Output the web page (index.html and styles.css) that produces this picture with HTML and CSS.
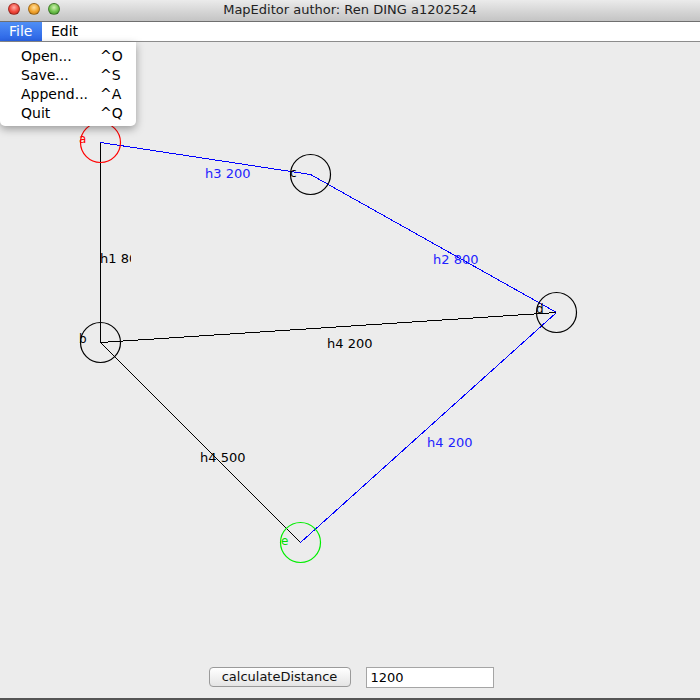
FILE: index.html
```html
<!DOCTYPE html>
<html>
<head>
<meta charset="utf-8">
<title>MapEditor</title>
<link rel="stylesheet" href="styles.css">
</head>
<body>
<div class="window">
  <div class="titlebar">
    <div class="lights">
      <span class="light red"></span>
      <span class="light yellow"></span>
      <span class="light green"></span>
    </div>
    <div class="title">MapEditor author: Ren DING a1202524</div>
  </div>
  <div class="menubar">
    <span class="menu active">File</span>
    <span class="menu">Edit</span>
  </div>
  <div class="canvas">
    <svg class="map" width="700" height="615" viewBox="0 42 700 615" xmlns="http://www.w3.org/2000/svg">
      <defs>
        <clipPath id="clipH1"><rect x="90" y="240" width="41" height="30"/></clipPath>
      </defs>
      <g shape-rendering="crispEdges" stroke-width="1" fill="none">
        <line x1="100.5" y1="142.5" x2="100.5" y2="342.5" stroke="#000"/>
        <line x1="100.5" y1="142.5" x2="310.5" y2="174.5" stroke="#0000ff"/>
        <line x1="310.5" y1="174.5" x2="556.5" y2="312.5" stroke="#0000ff"/>
        <line x1="100.5" y1="342.5" x2="556.5" y2="312.5" stroke="#000"/>
        <line x1="556.5" y1="312.5" x2="300.5" y2="542.5" stroke="#0000ff"/>
        <line x1="100.5" y1="342.5" x2="300.5" y2="542.5" stroke="#000"/>
      </g>
      <g fill="none" stroke-width="1.2">
        <circle cx="100.5" cy="142.5" r="20" stroke="#ff0000"/>
        <circle cx="310.5" cy="174.5" r="20" stroke="#000"/>
        <circle cx="100.5" cy="342.5" r="20" stroke="#000"/>
        <circle cx="556.5" cy="312.5" r="20" stroke="#000"/>
        <circle cx="300.5" cy="542.5" r="20" stroke="#00ee00"/>
      </g>
      <g class="nodelabel">
        <text x="79" y="143" fill="#ff0000">a</text>
        <text x="79" y="343" fill="#000">b</text>
        <text x="290" y="177" fill="#000">c</text>
        <text x="536" y="313" fill="#000">d</text>
        <text x="281" y="545" fill="#00dd00">e</text>
      </g>
      <g class="edgelabel">
        <text x="100" y="263" fill="#000" clip-path="url(#clipH1)">h1 80</text>
        <text x="205" y="178" fill="#2222ff">h3 200</text>
        <text x="433" y="264" fill="#2222ff">h2 800</text>
        <text x="327" y="348" fill="#000">h4 200</text>
        <text x="427" y="447" fill="#2222ff">h4 200</text>
        <text x="200" y="462" fill="#000">h4 500</text>
      </g>
    </svg>
    <div class="dropdown">
      <div class="item"><span class="label">Open...</span><span class="key">^O</span></div>
      <div class="item"><span class="label">Save...</span><span class="key">^S</span></div>
      <div class="item"><span class="label">Append...</span><span class="key">^A</span></div>
      <div class="item"><span class="label">Quit</span><span class="key">^Q</span></div>
    </div>
  </div>
  <div class="bottom">
    <button class="btn">calculateDistance</button>
    <div class="field">1200</div>
  </div>
</div>
</body>
</html>
```
FILE: styles.css
```css
html, body {
  margin: 0;
  padding: 0;
  background: #ececec;
}
body {
  font-family: "DejaVu Sans", "Noto Sans", sans-serif;
}
.window {
  width: 700px;
  height: 700px;
  display: flex;
  flex-direction: column;
  background: #ececec;
  overflow: hidden;
}
.titlebar {
  height: 21px;
  border-bottom: 1px solid #6f6f6f;
  background: linear-gradient(#ebebeb, #d3d3d3 60%, #c4c4c4);
  display: flex;
  align-items: center;
  position: relative;
}
.lights {
  display: flex;
  gap: 8px;
  padding-left: 8px;
  margin-top: -4px;
}
.light {
  width: 12px;
  height: 12px;
  border-radius: 50%;
  box-sizing: border-box;
  border: 1px solid rgba(0,0,0,0.3);
}
.light.red { background: radial-gradient(circle at 50% 35%, #ffb0a8, #f0463a 55%, #c02a20); }
.light.yellow { background: radial-gradient(circle at 50% 35%, #ffe0a0, #f0a22c 55%, #c07818); }
.light.green { background: radial-gradient(circle at 50% 35%, #d0f0b0, #6cc04a 55%, #3c8c28); }
.title {
  position: absolute;
  left: 0;
  right: 0;
  top: 1px;
  text-align: center;
  font-size: 13px;
  color: #222;
  line-height: 18px;
}
.menubar {
  height: 19px;
  background: #fff;
  border-bottom: 1px solid #8c8c8c;
  display: flex;
  align-items: stretch;
  font-size: 14px;
  color: #000;
}
.menu {
  padding: 0 9px;
  line-height: 19px;
}
.menu.active {
  background: linear-gradient(#4f8ef5, #2a64e6);
  color: #fff;
  width: 24px;
}
.canvas {
  flex: 1;
  position: relative;
}
.map {
  display: block;
}
.nodelabel text {
  font-family: "DejaVu Sans", sans-serif;
  font-size: 12px;
}
.edgelabel text {
  font-family: "DejaVu Sans", sans-serif;
  font-size: 13px;
}
.dropdown {
  position: absolute;
  left: 0;
  top: 0;
  width: 136px;
  padding: 5px 0 3px;
  background: #fff;
  border-radius: 0 0 5px 5px;
  box-shadow: 0 3px 8px rgba(0,0,0,0.35);
  font-size: 14px;
  color: #000;
}
.item {
  display: flex;
  height: 19px;
  line-height: 19px;
}
.item .label {
  width: 79px;
  padding-left: 21px;
}
.item .key {
  flex: 1;
}
.bottom {
  border-bottom: 2px solid #555;
  display: flex;
  justify-content: center;
  align-items: flex-start;
  gap: 15px;
  padding-top: 10px;
  padding-left: 2px;
  box-sizing: border-box;
  height: 43px;
}
.btn {
  width: 142px;
  height: 20px;
  margin: 0;
  padding: 0;
  border: 1px solid #9a9a9a;
  border-radius: 4px;
  background: linear-gradient(#ffffff, #f2f2f2 50%, #e4e4e4);
  font-family: "DejaVu Sans", sans-serif;
  font-size: 13px;
  color: #111;
  line-height: 18px;
}
.field {
  width: 128px;
  height: 21px;
  box-sizing: border-box;
  border: 1px solid #a5a5a5;
  background: #fff;
  font-size: 13px;
  line-height: 19px;
  padding-left: 4px;
  color: #000;
}
```
